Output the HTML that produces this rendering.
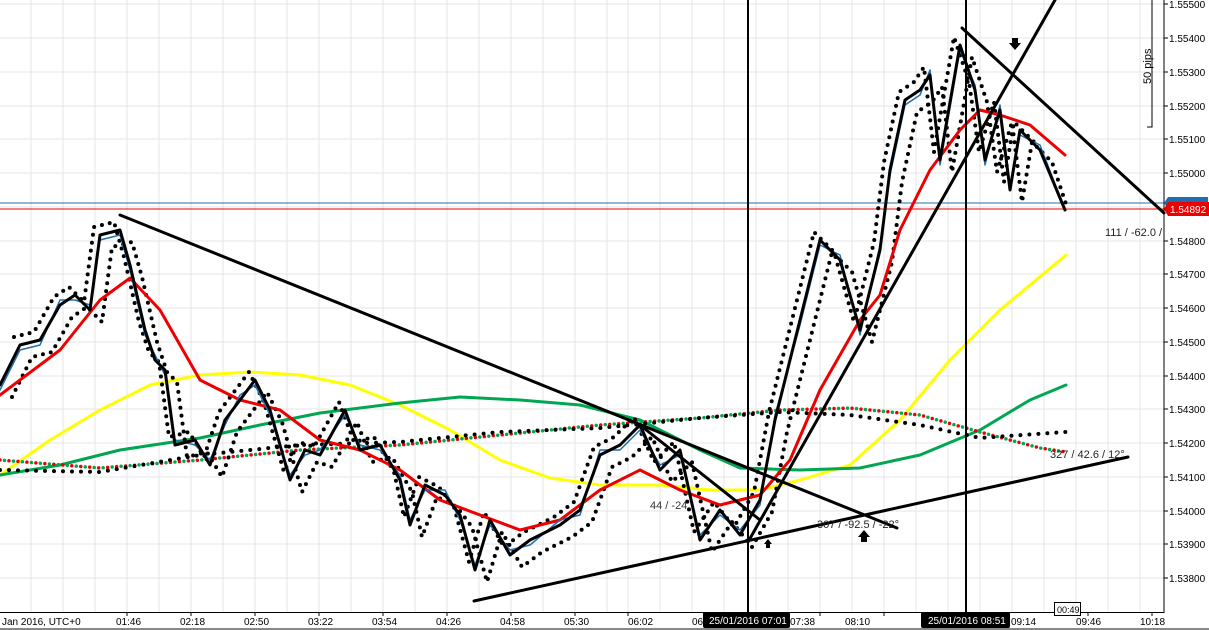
<!DOCTYPE html>
<html><head><meta charset="utf-8"><style>
html,body{margin:0;padding:0;background:#fff;}
svg{display:block;font-family:"Liberation Sans",sans-serif;}
</style></head><body>
<svg width="1209" height="630" viewBox="0 0 1209 630" xmlns="http://www.w3.org/2000/svg">
<rect width="1209" height="630" fill="#fff"/>
<g stroke="#e4e4e4" stroke-width="1">
<line x1="63" y1="0" x2="63" y2="612"/><line x1="95" y1="0" x2="95" y2="612"/><line x1="127" y1="0" x2="127" y2="612"/><line x1="159" y1="0" x2="159" y2="612"/><line x1="191" y1="0" x2="191" y2="612"/><line x1="223" y1="0" x2="223" y2="612"/><line x1="255" y1="0" x2="255" y2="612"/><line x1="287" y1="0" x2="287" y2="612"/><line x1="319" y1="0" x2="319" y2="612"/><line x1="351" y1="0" x2="351" y2="612"/><line x1="383" y1="0" x2="383" y2="612"/><line x1="415" y1="0" x2="415" y2="612"/><line x1="447" y1="0" x2="447" y2="612"/><line x1="479" y1="0" x2="479" y2="612"/><line x1="511" y1="0" x2="511" y2="612"/><line x1="543" y1="0" x2="543" y2="612"/><line x1="575" y1="0" x2="575" y2="612"/><line x1="607" y1="0" x2="607" y2="612"/><line x1="628" y1="0" x2="628" y2="612"/><line x1="660" y1="0" x2="660" y2="612"/><line x1="692" y1="0" x2="692" y2="612"/><line x1="724" y1="0" x2="724" y2="612"/><line x1="756" y1="0" x2="756" y2="612"/><line x1="788" y1="0" x2="788" y2="612"/><line x1="820" y1="0" x2="820" y2="612"/><line x1="852" y1="0" x2="852" y2="612"/><line x1="884" y1="0" x2="884" y2="612"/><line x1="916" y1="0" x2="916" y2="612"/><line x1="948" y1="0" x2="948" y2="612"/><line x1="980" y1="0" x2="980" y2="612"/><line x1="1012" y1="0" x2="1012" y2="612"/><line x1="1044" y1="0" x2="1044" y2="612"/><line x1="1076" y1="0" x2="1076" y2="612"/><line x1="1108" y1="0" x2="1108" y2="612"/><line x1="1140" y1="0" x2="1140" y2="612"/><line x1="31" y1="0" x2="31" y2="612"/>
<line x1="0" y1="4" x2="1164" y2="4"/><line x1="0" y1="38" x2="1164" y2="38"/><line x1="0" y1="72" x2="1164" y2="72"/><line x1="0" y1="106" x2="1164" y2="106"/><line x1="0" y1="139" x2="1164" y2="139"/><line x1="0" y1="173" x2="1164" y2="173"/><line x1="0" y1="207" x2="1164" y2="207"/><line x1="0" y1="241" x2="1164" y2="241"/><line x1="0" y1="274" x2="1164" y2="274"/><line x1="0" y1="308" x2="1164" y2="308"/><line x1="0" y1="342" x2="1164" y2="342"/><line x1="0" y1="376" x2="1164" y2="376"/><line x1="0" y1="409" x2="1164" y2="409"/><line x1="0" y1="443" x2="1164" y2="443"/><line x1="0" y1="477" x2="1164" y2="477"/><line x1="0" y1="511" x2="1164" y2="511"/><line x1="0" y1="544" x2="1164" y2="544"/><line x1="0" y1="578" x2="1164" y2="578"/>
</g>
<line x1="0" y1="203" x2="1164" y2="203" stroke="#1f6fb0" stroke-width="1"/>
<line x1="0" y1="209" x2="1164" y2="209" stroke="#e00" stroke-width="1"/>
<g fill="none" stroke-linejoin="round" stroke-linecap="round">
<polyline stroke="#ffff00" stroke-width="3" points="0,475 50,440 100,410 150,385 200,375 250,372 300,375 350,385 400,405 450,430 500,460 550,478 600,485 660,485 710,490 760,490 800,480 850,465 900,420 950,360 1000,310 1066,255"/>
<polyline stroke="#00a651" stroke-width="3" points="0,475 60,465 120,450 200,438 260,425 320,413 400,403 460,397 520,400 580,405 640,420 700,450 740,468 800,470 860,468 920,455 980,430 1030,400 1066,385"/>
<polyline stroke="#e00" stroke-width="3.5" stroke-dasharray="0 9" points="0,460 100,468 200,460 300,450 400,445 500,435 600,425 700,418 780,410 850,408 920,415 980,432 1040,448 1066,452"/>
<polyline stroke="#00a651" stroke-width="3.5" stroke-dasharray="0 9" stroke-dashoffset="4.5" points="0,460 100,468 200,460 300,450 400,445 500,435 600,425 700,418 780,410 850,408 920,415 980,432 1040,448 1066,452"/>
<polyline stroke="#000" stroke-width="4" stroke-dasharray="0 9" points="0,470 100,472 200,455 300,445 400,442 500,432 600,428 700,418 780,412 850,415 920,425 980,438 1066,432"/>
<g stroke="#000" stroke-width="4" stroke-dasharray="0 8">
<polyline transform="translate(12,12)" points="0,385 20,345 40,340 60,305 75,295 90,310 100,235 120,230 130,265 145,330 155,360 165,370 175,445 195,440 210,465 225,420 240,400 255,380 270,410 290,480 305,450 320,455 345,410 360,450 380,445 400,480 410,525 425,485 445,495 460,515 475,570 490,520 510,555 530,540 560,525 580,510 600,455 620,445 640,425 660,470 680,450 700,540 720,510 740,535 760,500 775,420 800,320 820,240 840,260 860,330 880,250 890,170 905,100 920,90 930,75 940,160 960,45 975,90 985,160 1000,110 1010,190 1020,130 1040,150 1055,195"/>
<polyline transform="translate(-6,-8)" points="20,345 40,340 60,305 75,295 90,310 100,235 120,230 130,265 145,330 155,360 165,370 175,445 195,440 210,465 225,420 240,400 255,380 270,410 290,480 305,450 320,455 345,410 360,450 380,445 400,480 410,525 425,485 445,495 460,515 475,570 490,520 510,555 530,540 560,525 580,510 600,455 620,445 640,425 660,470 680,450 700,540 720,510 740,535 760,500 775,420 800,320 820,240 840,260 860,330 880,250 890,170 905,100 920,90 930,75 940,160 960,45 975,90 985,160 1000,110 1010,190 1020,130 1040,150"/>
</g>
<polyline stroke="#e00" stroke-width="3" points="0,395 60,350 100,300 130,278 160,310 200,380 240,400 280,410 320,440 360,450 400,470 440,500 480,515 520,530 560,520 600,490 640,470 680,490 720,505 760,495 790,460 820,390 860,320 880,295 900,230 930,170 960,130 980,110 1000,115 1030,125 1065,155"/>
<polyline stroke="#1f6fb0" stroke-width="1.5" points="0,390 20,350 40,345 60,300 75,300 90,305 100,240 120,235 130,270 145,335 155,355 165,375 175,440 195,445 210,460 225,425 240,395 255,385 270,415 290,475 305,455 320,450 345,415 360,445 380,450 400,475 410,520 425,490 445,490 460,520 475,565 490,525 510,550 530,545 560,520 580,515 600,450 620,450 640,430 660,465 680,455 700,535 720,515 740,530 760,505 775,415 800,325 820,245 840,255 860,335 880,245 890,175 905,105 920,95 930,70 940,165 960,50 975,85 985,165 1000,105 1010,185 1020,135 1040,145 1065,210"/>
<polyline stroke="#000" stroke-width="3" points="0,385 20,345 40,340 60,305 75,295 90,310 100,235 120,230 130,265 145,330 155,360 165,370 175,445 195,440 210,465 225,420 240,400 255,380 270,410 290,480 305,450 320,455 345,410 360,450 380,445 400,480 410,525 425,485 445,495 460,515 475,570 490,520 510,555 530,540 560,525 580,510 600,455 620,445 640,425 660,470 680,450 700,540 720,510 740,535 760,500 775,420 800,320 820,240 840,260 860,330 880,250 890,170 905,100 920,90 930,75 940,160 960,45 975,90 985,160 1000,110 1010,190 1020,130 1040,150 1065,210"/>
<g stroke="#000" stroke-width="3">
<line x1="120" y1="215" x2="897" y2="528"/>
<line x1="474" y1="601" x2="1128" y2="457"/>
<line x1="748" y1="542" x2="1055" y2="0"/>
<line x1="962" y1="28" x2="1164" y2="213"/>
<line x1="640" y1="425" x2="760" y2="520"/>
</g>
</g>
<line x1="748" y1="0" x2="748" y2="612" stroke="#000" stroke-width="2"/>
<line x1="966" y1="0" x2="966" y2="612" stroke="#000" stroke-width="2"/>
<polyline points="1152,0 1152,127 1147,127" fill="none" stroke="#000" stroke-width="1"/>
<text transform="translate(1151,84) rotate(-90)" font-size="11" fill="#000">50 pips</text>
<g fill="#000">
<polygon points="768,539 764,544 766,544 766,548 770,548 770,544 772,544"/>
<polygon points="864,530 858,537 861,537 861,542 867,542 867,537 870,537"/>
<polygon points="1015,50 1009,43 1012,43 1012,38 1018,38 1018,43 1021,43"/>
</g>
<g font-size="11" fill="#222">
<text x="1105" y="236">111 / -62.0 /</text>
<text x="1050" y="458">327 / 42.6 / 12°</text>
<text x="650" y="509" fill="#333">44 / -24</text>
<text x="817" y="528">307 / -92.5 / -22°</text>
</g>
<line x1="1164" y1="0" x2="1164" y2="613" stroke="#000" stroke-width="1"/>
<line x1="0" y1="612.5" x2="1164" y2="612.5" stroke="#000" stroke-width="1"/>
<line x1="0" y1="629" x2="1209" y2="629" stroke="#888" stroke-width="2"/>
<g font-size="10" fill="#000">
<text x="1169" y="8">1.55500</text><text x="1169" y="42">1.55400</text><text x="1169" y="76">1.55300</text><text x="1169" y="110">1.55200</text><text x="1169" y="143">1.55100</text><text x="1169" y="177">1.55000</text><text x="1169" y="245">1.54800</text><text x="1169" y="278">1.54700</text><text x="1169" y="312">1.54600</text><text x="1169" y="346">1.54500</text><text x="1169" y="380">1.54400</text><text x="1169" y="413">1.54300</text><text x="1169" y="447">1.54200</text><text x="1169" y="481">1.54100</text><text x="1169" y="515">1.54000</text><text x="1169" y="548">1.53900</text><text x="1169" y="582">1.53800</text>
</g>
<g stroke="#000"><line x1="1164" y1="4" x2="1168" y2="4"/><line x1="1164" y1="38" x2="1168" y2="38"/><line x1="1164" y1="72" x2="1168" y2="72"/><line x1="1164" y1="106" x2="1168" y2="106"/><line x1="1164" y1="139" x2="1168" y2="139"/><line x1="1164" y1="173" x2="1168" y2="173"/><line x1="1164" y1="241" x2="1168" y2="241"/><line x1="1164" y1="274" x2="1168" y2="274"/><line x1="1164" y1="308" x2="1168" y2="308"/><line x1="1164" y1="342" x2="1168" y2="342"/><line x1="1164" y1="376" x2="1168" y2="376"/><line x1="1164" y1="409" x2="1168" y2="409"/><line x1="1164" y1="443" x2="1168" y2="443"/><line x1="1164" y1="477" x2="1168" y2="477"/><line x1="1164" y1="511" x2="1168" y2="511"/><line x1="1164" y1="544" x2="1168" y2="544"/><line x1="1164" y1="578" x2="1168" y2="578"/></g>
<path d="M1164,203 l4,-6 h40 v12 h-40 z" fill="#1f6fb0"/>
<path d="M1164,209 l4,-7 h41 v14 h-41 z" fill="#e00"/>
<text x="1170" y="213" font-size="10" fill="#fff">1.54892</text>
<g font-size="10" fill="#000">
<text x="2" y="625">Jan 2016, UTC+0</text><text x="116" y="625">01:46</text><text x="180" y="625">02:18</text><text x="244" y="625">02:50</text><text x="308" y="625">03:22</text><text x="372" y="625">03:54</text><text x="436" y="625">04:26</text><text x="500" y="625">04:58</text><text x="564" y="625">05:30</text><text x="628" y="625">06:02</text><text x="692" y="625">06</text><text x="790" y="625">07:38</text><text x="845" y="625">08:10</text><text x="1011" y="625">09:14</text><text x="1076" y="625">09:46</text><text x="1140" y="625">10:18</text>
</g>
<g stroke="#000"><line x1="127" y1="612" x2="127" y2="616"/><line x1="191" y1="612" x2="191" y2="616"/><line x1="255" y1="612" x2="255" y2="616"/><line x1="319" y1="612" x2="319" y2="616"/><line x1="383" y1="612" x2="383" y2="616"/><line x1="447" y1="612" x2="447" y2="616"/><line x1="511" y1="612" x2="511" y2="616"/><line x1="575" y1="612" x2="575" y2="616"/><line x1="628" y1="612" x2="628" y2="616"/><line x1="820" y1="612" x2="820" y2="616"/><line x1="884" y1="612" x2="884" y2="616"/><line x1="1088" y1="612" x2="1088" y2="616"/><line x1="1152" y1="612" x2="1152" y2="616"/></g>
<rect x="703" y="612" width="87" height="16" rx="2" fill="#000"/>
<text x="709" y="624" font-size="10" fill="#fff">25/01/2016 07:01</text>
<rect x="921" y="612" width="89" height="16" rx="2" fill="#000"/>
<text x="928" y="624" font-size="10" fill="#fff">25/01/2016 08:51</text>
<rect x="1054.5" y="602.5" width="26" height="13" fill="#fff" stroke="#000"/>
<text x="1057" y="613" font-size="9" fill="#000">00:49</text>
</svg>
</body></html>
